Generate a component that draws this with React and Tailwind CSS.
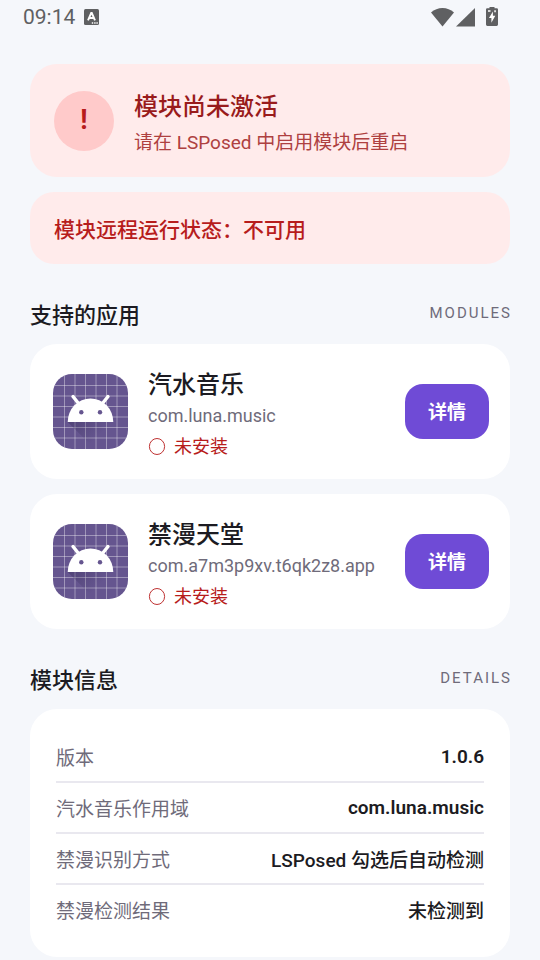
// src/App.jsx
const apps = [
  { name: "汽水音乐", pkg: "com.luna.music", status: "未安装" },
  { name: "禁漫天堂", pkg: "com.a7m3p9xv.t6qk2z8.app", status: "未安装" },
];

// latin: the value holds no Chinese glyphs and sits on the Roboto baseline
const details = [
  { label: "版本", value: "1.0.6", latin: true },
  { label: "汽水音乐作用域", value: "com.luna.music", latin: true },
  { label: "禁漫识别方式", value: "LSPosed 勾选后自动检测" },
  { label: "禁漫检测结果", value: "未检测到" },
];

const gridLines = [11.5, 22, 32.5, 43, 53.5, 64];

function StatusBar() {
  return (
    <header className="flex h-[34px] items-center justify-between pl-[23px] pr-[42px] text-[#5f6062]">
      <div className="flex items-center gap-[9px]">
        <span className="text-[21px] leading-[34px]">09:14</span>
        <svg className="h-4 w-[15px]" viewBox="0 0 15 16" aria-hidden="true">
          <rect width="15" height="16" rx="1.5" fill="currentColor" />
          <path d="M4 11.3 7.2 4h.6L11 11.3M5.2 9h4.6" fill="none" stroke="#fff" strokeWidth="1.9" />
          <path d="M7.8 14h1.4M10.2 14h1.4M12.4 14h1.4" stroke="#fff" strokeWidth="1.3" />
        </svg>
      </div>
      <div className="flex items-center">
        <svg className="h-5 w-[23px]" viewBox="0 0 23 20" aria-hidden="true">
          <path d="M0 5.5Q5 1 11.5 1T23 5.5L11.5 19.5Z" fill="currentColor" />
        </svg>
        <svg className="ml-0.5 h-5 w-[19px]" viewBox="0 0 19 20" aria-hidden="true">
          <path d="M19 1v18.5H0Z" fill="currentColor" />
        </svg>
        <svg className="ml-[11px] h-5 w-3" viewBox="0 0 12 20" aria-hidden="true">
          <path d="M3.5 0h5v1.3h2.2q1.3 0 1.3 1.3v15q0 1.4-1.4 1.4H1.4Q0 19 0 17.6V2.6Q0 1.3 1.3 1.3h2.2Z" fill="currentColor" />
          <path d="M6.9 4.5v4.3h2.4L5.4 15.8V10.9H3ZM2 3.3h2.5v1.4H2ZM8.3 3.3h1.5v2H8.3Z" fill="#fff" />
        </svg>
      </div>
    </header>
  );
}

function AppIcon({ id }) {
  return (
    <svg className="size-[75px] shrink-0" viewBox="0 0 75 75" aria-hidden="true">
      <defs>
        <clipPath id={`${id}-clip`}>
          <rect width="75" height="75" rx="19" />
        </clipPath>
        <linearGradient id={`${id}-shade`} x1="20" y1="40" x2="50" y2="70" gradientUnits="userSpaceOnUse">
          <stop offset="0" stopColor="#2f2750" stopOpacity="0.4" />
          <stop offset="0.8" stopColor="#2f2750" stopOpacity="0" />
        </linearGradient>
      </defs>
      <g clipPath={`url(#${id}-clip)`}>
        <rect width="75" height="75" fill="#65558f" />
        {gridLines.map((n) => (
          <path key={n} d={`M${n} 0V75M0 ${n}H75`} stroke="#fff" strokeOpacity="0.38" strokeWidth="1" />
        ))}
        <path d="M14.7 48 42 75H75V62L60.3 48Z" fill={`url(#${id}-shade)`} />
      </g>
      <path d="M14.7 48a22.8 23.6 0 0 1 45.6 0Z" fill="#fff" />
      <path d="m20 22.5 6 7.5M55 22.5 49 30" stroke="#fff" strokeWidth="3.4" strokeLinecap="round" />
      <circle cx="28.3" cy="38.3" r="2.2" fill="#65558f" />
      <circle cx="47" cy="38.3" r="2.2" fill="#65558f" />
    </svg>
  );
}

function SectionTitle({ title, tag }) {
  return (
    <div className="mb-3 mt-9 flex items-start justify-between">
      <h2 className="text-[22px] font-medium leading-8">{title}</h2>
      <span className="-mr-0.5 text-[15px] leading-[26px] tracking-[2px] text-[#6f6b7a]">{tag}</span>
    </div>
  );
}

function AppCard({ app, id }) {
  return (
    <li className="flex items-center gap-5 rounded-[27px] bg-white py-3 pl-[23px] pr-[21px]">
      <AppIcon id={id} />
      <div className="min-w-0 flex-1 pt-[10px]">
        <h3 className="text-2xl font-medium leading-[38px]">{app.name}</h3>
        <p className="text-[18px] leading-[23px] text-[#6f6b7a]">{app.pkg}</p>
        <p className="flex items-center gap-2 text-[18px] leading-10 text-[#b71c1c]">
          <svg className="size-[18px]" viewBox="0 0 18 18" aria-hidden="true">
            <ellipse cx="9" cy="8.5" rx="7.6" ry="8" fill="none" stroke="currentColor" strokeWidth="0.9" />
          </svg>
          {app.status}
        </p>
      </div>
      <button type="button" className="h-[55px] w-[84px] shrink-0 rounded-[18px] bg-[#6f4bd6] pt-1 text-[19px] font-bold text-white">
        详情
      </button>
    </li>
  );
}

export default function App() {
  return (
    <div className="min-h-screen bg-[#f5f7fb] font-['Roboto','Noto_Sans_CJK_SC',sans-serif] text-[#1c1b22]">
      <StatusBar />
      <main className="px-[30px] pb-[3px] pt-[30px]">
        <section className="flex items-center gap-5 rounded-[27px] bg-[#ffebeb] px-6 py-4">
          <span className="flex size-[60px] shrink-0 items-center justify-center rounded-full bg-[#ffcaca] text-[27px] font-bold text-[#b71c1c]">
            !
          </span>
          <div className="pt-[9px]">
            <h1 className="text-2xl font-medium leading-9 text-[#991b1b]">模块尚未激活</h1>
            <p className="text-[19px] leading-9 text-[#ae4040]">请在 LSPosed 中启用模块后重启</p>
          </div>
        </section>

        <section className="mt-[15px] rounded-[24px] bg-[#ffebeb] px-6 pb-[18px] pt-[22px]">
          <p className="text-[21px] font-medium leading-8 text-[#b71c1c]">模块远程运行状态：不可用</p>
        </section>

        <SectionTitle title="支持的应用" tag="MODULES" />
        <ul className="flex flex-col gap-[15px]">
          {apps.map((app, i) => (
            <AppCard key={app.pkg} app={app} id={`app-${i}`} />
          ))}
        </ul>

        <SectionTitle title="模块信息" tag="DETAILS" />
        <dl className="divide-y-2 divide-[#e9e8ef] rounded-[27px] bg-white px-[26px] py-[23px] text-[19px] leading-[45px]">
          {details.map((row) => (
            <div key={row.label} className="flex items-center justify-between">
              <dt className="pt-1 text-[#6f6b7a]">{row.label}</dt>
              <dd className={row.latin ? "font-semibold" : "pt-1 font-medium"}>{row.value}</dd>
            </div>
          ))}
        </dl>
      </main>
    </div>
  );
}
